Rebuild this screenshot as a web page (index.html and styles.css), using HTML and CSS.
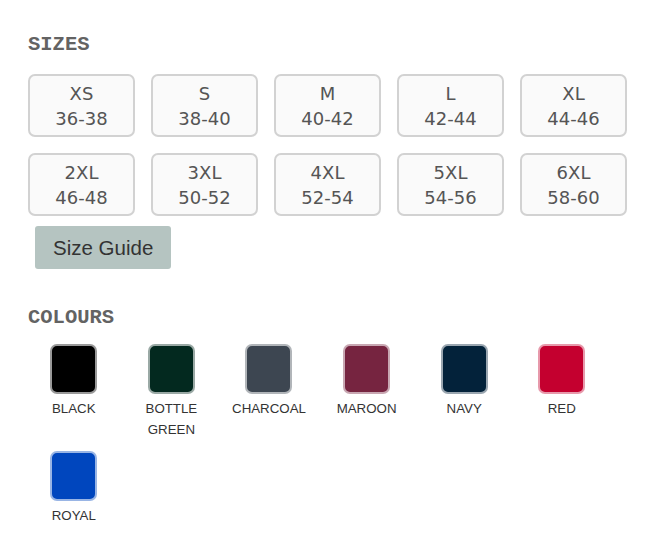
FILE: index.html
```html
<!DOCTYPE html>
<html lang="en">
<head>
  <meta charset="UTF-8">
  <meta name="viewport" content="width=device-width, initial-scale=1.0">
  <title>Product Options</title>
  <link rel="stylesheet" href="styles.css">
</head>
<body>
  <div class="options">
    <h2 class="option-title">SIZES</h2>
    <div class="size-grid">
      <div class="size"><span>XS</span><span>36-38</span></div>
      <div class="size"><span>S</span><span>38-40</span></div>
      <div class="size"><span>M</span><span>40-42</span></div>
      <div class="size"><span>L</span><span>42-44</span></div>
      <div class="size"><span>XL</span><span>44-46</span></div>
      <div class="size"><span>2XL</span><span>46-48</span></div>
      <div class="size"><span>3XL</span><span>50-52</span></div>
      <div class="size"><span>4XL</span><span>52-54</span></div>
      <div class="size"><span>5XL</span><span>54-56</span></div>
      <div class="size"><span>6XL</span><span>58-60</span></div>
    </div>
    <button class="size-guide">Size Guide</button>

    <h2 class="option-title colours-title">COLOURS</h2>
    <div class="colour-grid">
      <div class="colour"><div class="swatch black"></div><span>BLACK</span></div>
      <div class="colour"><div class="swatch bottle"></div><span>BOTTLE GREEN</span></div>
      <div class="colour"><div class="swatch charcoal"></div><span>CHARCOAL</span></div>
      <div class="colour"><div class="swatch maroon"></div><span>MAROON</span></div>
      <div class="colour"><div class="swatch navy"></div><span>NAVY</span></div>
      <div class="colour"><div class="swatch red"></div><span>RED</span></div>
      <div class="colour"><div class="swatch royal"></div><span>ROYAL</span></div>
    </div>
  </div>
</body>
</html>
```

FILE: styles.css
```css
body { margin: 0; background: #fff; font-family: "Liberation Sans", Arial, sans-serif; }
.options { padding: 33px 28px; }

.option-title {
  margin: 0 0 18px;
  font-family: "Liberation Mono", "Courier New", monospace;
  font-size: 20.5px; font-weight: bold;
  line-height: 23px;
  color: #636363;
}
.colours-title { margin-top: 37px; margin-bottom: 15px; }

.size-grid {
  display: grid;
  grid-template-columns: repeat(5, 107px);
  gap: 16px;
}
.size {
  height: 63px;
  box-sizing: border-box;
  padding: 4px 0;
  border: 2px solid #d2d2d2;
  border-radius: 7px;
  background: #fafafa;
  display: flex; flex-direction: column; align-items: center; justify-content: center;
  font-family: "DejaVu Sans", Verdana, sans-serif;
  font-size: 18px; line-height: 25px;
  color: #555;
}

.size-guide {
  margin: 10px 0 0 7px;
  height: 43px;
  padding: 0 18px;
  border: none; border-radius: 3px;
  background: #b5c4c1;
  font-family: "Liberation Sans", Arial, sans-serif;
  font-size: 20.5px;
  color: #333;
  cursor: pointer;
}

.colour-grid {
  display: grid;
  grid-template-columns: repeat(6, 97.6px);
  row-gap: 11px;
  margin-left: -3px;
}
.colour {
  display: flex; flex-direction: column; align-items: center;
  text-align: center;
  font-size: 13.3px; line-height: 21px;
  color: #333;
}
.colour span { margin-top: 4px; }
.swatch {
  width: 47px; height: 50px;
  box-sizing: border-box;
  border: 2px solid rgba(255, 255, 255, 0.6);
  border-radius: 7px;
}
.black { background: #000; }
.bottle { background: #03291f; }
.charcoal { background: #3d4651; }
.maroon { background: #762440; }
.navy { background: #03223a; }
.red { background: #c4002f; }
.royal { background: #0046be; }
```
